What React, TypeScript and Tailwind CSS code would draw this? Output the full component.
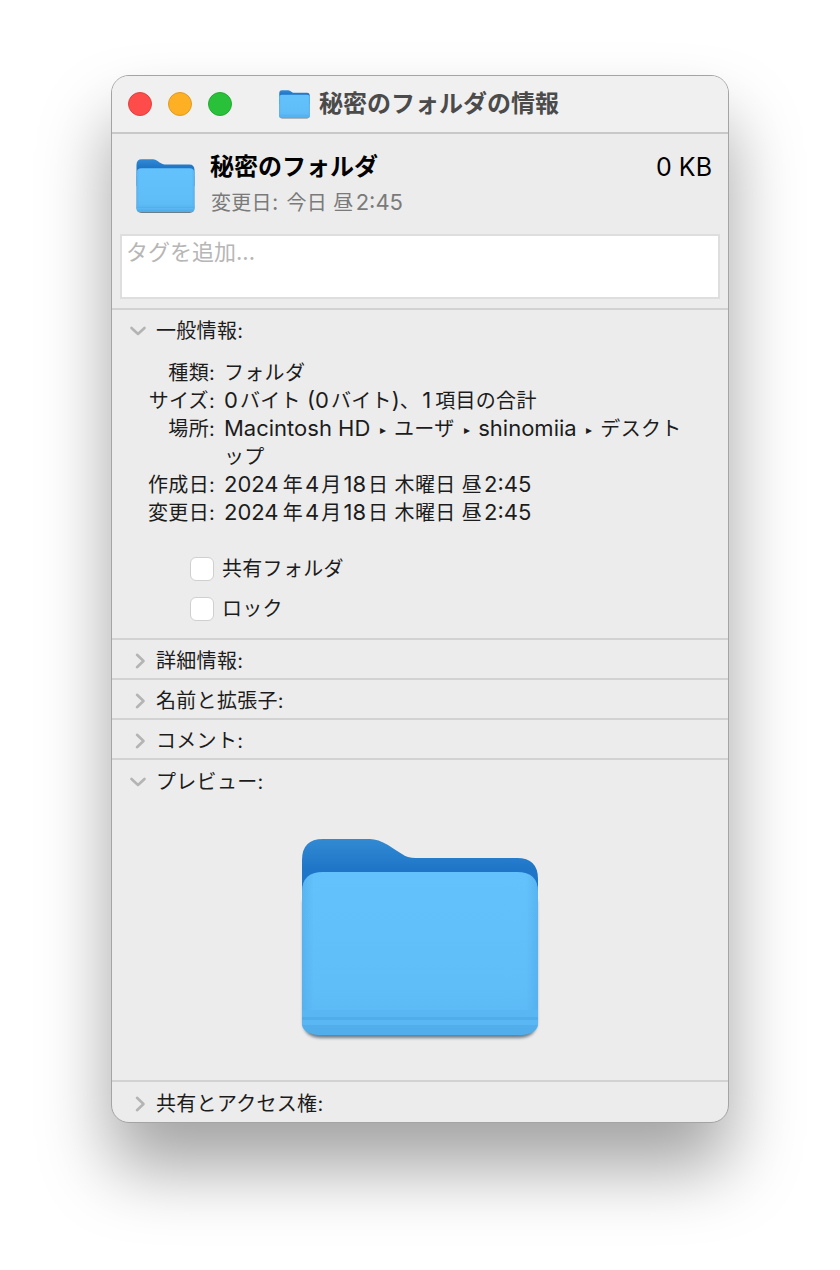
const font = { fontFamily: '"Inter", "Noto Sans CJK JP", sans-serif' };

function Folder({ className }: { className?: string }) {
  return (
    <svg viewBox="0 0 240 204" preserveAspectRatio="none" className={className}>
      <defs>
        <linearGradient id="fb" x1="0" y1="0" x2="0" y2="1">
          <stop offset="0" stopColor="#328ad2" />
          <stop offset="0.3" stopColor="#1f76c8" />
        </linearGradient>
        <linearGradient id="ff" x1="0" y1="0" x2="0" y2="1">
          <stop offset="0" stopColor="#63c1fb" />
          <stop offset="0.7" stopColor="#5fbdf8" />
          <stop offset="1" stopColor="#5ab7f3" />
        </linearGradient>
        <linearGradient id="fs" x1="0" y1="0" x2="1" y2="0">
          <stop offset="0" stopColor="#4ea8e6" stopOpacity="0.5" />
          <stop offset="0.05" stopColor="#4ea8e6" stopOpacity="0" />
          <stop offset="0.95" stopColor="#4ea8e6" stopOpacity="0" />
          <stop offset="1" stopColor="#4ea8e6" stopOpacity="0.5" />
        </linearGradient>
        <filter id="fh" x="-5%" y="-5%" width="110%" height="110%">
          <feGaussianBlur stdDeviation="1.5" />
        </filter>
      </defs>
      <path d="M3 60 H237 V180 Q237 197 218 197 H22 Q3 197 3 180 Z" fill="#1c3148" opacity="0.6" transform="translate(0 3)" filter="url(#fh)" />
      <path d="M2 22 Q2 1 23 1 H70 Q78 1 88 7 Q97 13 102 16 Q107 20 116 20 H217 Q238 20 238 41 V100 H2 Z" fill="url(#fb)" />
      <path d="M2 54 Q2 34 23 34 H217 Q238 34 238 54 V177 Q238 197 218 197 H22 Q2 197 2 177 Z" fill="url(#ff)" />
      <path d="M2 54 Q2 34 23 34 H217 Q238 34 238 54 V177 Q238 197 218 197 H22 Q2 197 2 177 Z" fill="url(#fs)" />
      <rect x="2" y="172" width="236" height="7" fill="#5ab6f3" />
      <rect x="2" y="179" width="236" height="3" fill="#51ade9" />
      <path d="M2 182 H238 V187 H2 Z" fill="#5ab7f4" />
      <path d="M2 187 H238 Q236 197 218 197 H22 Q4 197 2 187 Z" fill="#52aeea" />
    </svg>
  );
}

function Chevron({ open }: { open?: boolean }) {
  return (
    <svg viewBox="0 0 18 18" className="w-[18px] h-[18px] shrink-0" fill="none" stroke="#b4b4b4" strokeWidth="2.6" strokeLinecap="round" strokeLinejoin="round">
      {open ? <path d="M2.5 6 L9 12 L15.5 6" /> : <path d="M8 2.8 L14.5 9 L8 15.2" />}
    </svg>
  );
}

// latin runs are a bit larger than the kana next to them, with a small gap where they touch kana
function Mixed({ text }: { text: string }) {
  const parts = text.split(/([A-Za-z0-9:() ]+|▸)/);
  return (
    <>
      {parts.map((part, i) => {
        if (part === "▸") {
          return <span key={i} className="text-[12px] leading-none ml-[3px] mr-[2px] align-[2px]">▸</span>;
        }
        if (/^[A-Za-z0-9:() ]+$/.test(part)) {
          const before = i > 0 && parts[i - 1] !== "" && /^[A-Za-z0-9]/.test(part);
          const after = i < parts.length - 1 && parts[i + 1] !== "" && /[A-Za-z0-9]$/.test(part);
          return (
            <span key={i} className={`text-[22px] leading-none tracking-normal ${before ? "ml-[2px]" : ""} ${after ? "mr-[2px]" : ""}`}>
              {part}
            </span>
          );
        }
        return <span key={i}>{part}</span>;
      })}
    </>
  );
}

function Section({ label, open, last }: { label: string; open?: boolean; last?: boolean }) {
  return (
    <div className={`${last ? "flex-1" : "h-10"} flex items-center border-t-2 border-[#d2d2d2] pt-[3px] pl-[17px] gap-[9px] text-[20px] tracking-[0.3px] text-[#1c1c1c]`}>
      <Chevron open={open} />
      <span className="leading-7">{label}</span>
    </div>
  );
}

const rows: [string, string][] = [
  ["種類:", "フォルダ"],
  ["サイズ:", "0バイト (0バイト)、1\u200A項目の合計"],
  ["場所:", "Macintosh HD ▸ ユーザ ▸ shinomiia ▸ デスクト\nップ"],
  ["作成日:", "2024\u200A年4月18日 木曜日 昼2:45"],
  ["変更日:", "2024\u200A年4月18日 木曜日 昼2:45"],
];

export default function App() {
  return (
    <div className="w-[840px] h-[1270px] bg-white flex justify-center pt-[75px] overflow-hidden" style={font}>
      <div className="w-[618px] h-[1048px] rounded-[18px] bg-[#ececec] border border-[#a4a4a4] shadow-[0_45px_70px_rgba(0,0,0,0.36)] flex flex-col overflow-hidden">
        <div className="h-[58px] shrink-0 bg-[#f0f0f0] border-b-2 border-[#c8c8c8] flex items-center pl-[16px] gap-[16px]">
          <span className="w-6 h-6 rounded-full bg-[#fd4c4a] border border-[#e0403e]" />
          <span className="w-6 h-6 rounded-full bg-[#feb024] border border-[#e09a20]" />
          <span className="w-6 h-6 rounded-full bg-[#29c13a] border border-[#25aa33]" />
          <div className="flex items-center gap-[9px] ml-[31px]">
            <Folder className="w-[31px] h-[29px]" />
            <span className="text-[24px] font-bold text-[#4b4b4b] leading-none">秘密のフォルダの情報</span>
          </div>
        </div>

        <div className="h-[174px] shrink-0 flex flex-col bg-[#ececec]">
          <div className="flex pl-[24px] pr-[16px] pt-[18px]">
            <Folder className="w-[59px] h-[55px] mt-[7px] shrink-0" />
            <div className="ml-[15px] flex-1">
              <div className="flex justify-between">
                <span className="text-[24px] leading-[30px] font-bold text-black">秘密のフォルダ</span>
                <span className="text-[25px] leading-[30px] text-black">0 KB</span>
              </div>
              <div className="text-[20px] leading-[28px] text-[#7a7a7a] mt-[7px] ml-px tracking-[0.3px]"><Mixed text={"変更日: \u200A今日 昼2:45"} /></div>
            </div>
          </div>
          <div className="mx-[8px] mt-[17px] h-[65px] bg-white border-2 border-[#dedede] text-[22px] text-[#b6b6b6] px-[4px] leading-[32px]">タグを追加...</div>
        </div>

        <div className="h-[330px] shrink-0 border-t-2 border-[#d2d2d2]">
          <div className="h-10 flex items-center pt-[1px] pl-[17px] gap-[9px] text-[20px] tracking-[0.3px] text-[#1c1c1c]">
            <Chevron open />
            <span>一般情報:</span>
          </div>
          <div className="mt-[9px] flex flex-col text-[20px] leading-[28px] tracking-[0.3px] text-[#1c1c1c]">
            {rows.map(([k, v]) => (
              <div key={k} className="flex">
                <div className="w-[103px] text-right shrink-0">{k}</div>
                <div className="ml-[9px] w-[480px] whitespace-pre-line"><Mixed text={v} /></div>
              </div>
            ))}
          </div>
          <div className="mt-[30px] ml-[78px] flex flex-col gap-[16px] text-[20px] tracking-[0.3px] text-[#1c1c1c]">
            <label className="flex items-center gap-[8px] h-6">
              <span className="w-6 h-6 rounded-[6px] bg-white border border-[#cfcfcf]" />
              共有フォルダ
            </label>
            <label className="flex items-center gap-[8px] h-6">
              <span className="w-6 h-6 rounded-[6px] bg-white border border-[#cfcfcf]" />
              ロック
            </label>
          </div>
        </div>

        <Section label="詳細情報:" />
        <Section label="名前と拡張子:" />
        <Section label="コメント:" />
        <div className="h-[322px] shrink-0 border-t-2 border-[#d2d2d2] flex flex-col">
          <div className="h-10 flex items-center pt-[3px] pl-[17px] gap-[9px] text-[20px] tracking-[0.3px] text-[#1c1c1c]">
            <Chevron open />
            <span>プレビュー:</span>
          </div>
          <div className="flex justify-center mt-[38px]">
            <Folder className="w-[240px] h-[204px]" />
          </div>
        </div>
        <Section label="共有とアクセス権:" last />
      </div>
    </div>
  );
}
